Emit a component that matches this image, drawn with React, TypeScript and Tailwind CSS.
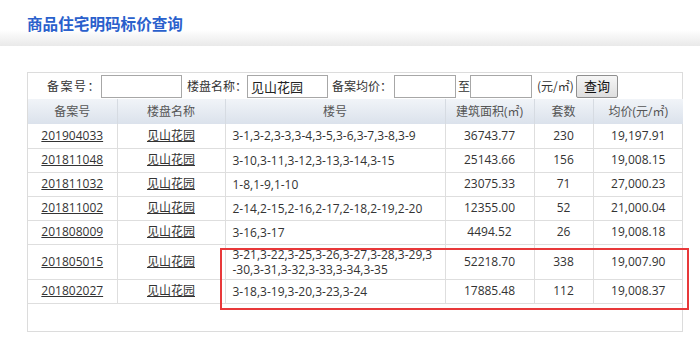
const rows = [
  { no: "201904033", units: "3-1,3-2,3-3,3-4,3-5,3-6,3-7,3-8,3-9", area: "36743.77", count: "230", price: "19,197.91" },
  { no: "201811048", units: "3-10,3-11,3-12,3-13,3-14,3-15", area: "25143.66", count: "156", price: "19,008.15" },
  { no: "201811032", units: "1-8,1-9,1-10", area: "23075.33", count: "71", price: "27,000.23" },
  { no: "201811002", units: "2-14,2-15,2-16,2-17,2-18,2-19,2-20", area: "12355.00", count: "52", price: "21,000.04" },
  { no: "201808009", units: "3-16,3-17", area: "4494.52", count: "26", price: "19,008.18" },
  { no: "201805015", units: "3-21,3-22,3-25,3-26,3-27,3-28,3-29,3\n-30,3-31,3-32,3-33,3-34,3-35", area: "52218.70", count: "338", price: "19,007.90" },
  { no: "201802027", units: "3-18,3-19,3-20,3-23,3-24", area: "17885.48", count: "112", price: "19,008.37" },
];

const headers = ["备案号", "楼盘名称", "楼号", "建筑面积(㎡)", "套数", "均价(元/㎡)"];
const widths = ["w-[89px]", "w-[108px]", "w-[220px]", "w-[89px]", "w-[59px]", "w-[90px]"];

export default function App() {
  return (
    <div className="w-[700px] h-[345px] bg-white font-['Open_Sans','Noto_Sans_CJK_SC',sans-serif] text-[12px] text-[#333] overflow-hidden">
      <div className="h-[46px] bg-linear-to-b from-white from-65% to-[#e9e9e9] pt-[12px]">
        <h1 className="ml-[27px] font-['Noto_Sans_CJK_SC',sans-serif] text-[15.6px] font-bold text-[#2a60cc] leading-[22px]">
          商品住宅明码标价查询
        </h1>
      </div>

      <div className="relative ml-[27px] mt-[26px] w-[656px] h-[260px] border border-[#dcdcdc]">
        <div className="flex items-center h-[26px] pl-[19px] text-[#333] font-['Noto_Sans_CJK_SC',sans-serif]">
          <span className="tracking-[1.5px]">备案号：</span>
          <input className="w-[81px] h-[23px] border border-[#a7a7a7] bg-white" />
          <span className="ml-[5px]">楼盘名称：</span>
          <input
            defaultValue="见山花园"
            className="w-[81px] h-[23px] border border-[#a7a7a7] bg-white px-[3px] text-[13px] text-[#222]"
          />
          <span className="ml-[4px]">备案均价：</span>
          <input className="ml-[2px] w-[62px] h-[23px] border border-[#a7a7a7] bg-white" />
          <span className="ml-[2px]">至</span>
          <input className="w-[62px] h-[23px] border border-[#a7a7a7] bg-white" />
          <span className="ml-[5px]">(元/㎡)</span>
          <button className="ml-[2px] w-[42px] h-[23px] border border-[#8f8f8f] rounded-[2px] bg-linear-to-b from-[#f6f6f6] to-[#dedede] text-[13px] text-[#111]">
            查询
          </button>
        </div>

        <table className="w-[655px] border-collapse table-fixed">
          <thead>
            <tr className="h-[25px] bg-linear-to-b from-[#f1f4f8] to-[#dbe2ec]">
              {headers.map((h, i) => (
                <th
                  key={h}
                  className={`${widths[i]} font-normal text-[#555] text-center border-r border-[#d6dbe2] last:border-r-0`}
                >
                  {h}
                </th>
              ))}
            </tr>
          </thead>
          <tbody>
            {rows.map((r) => (
              <tr key={r.no} className="h-[24px] border-b border-[#dedede]">
                <td className="text-center border-r border-[#dedede] py-[2px]">
                  <a className="underline text-[#333]">{r.no}</a>
                </td>
                <td className="text-center border-r border-[#dedede] py-[2px]">
                  <a className="underline text-[#333]">见山花园</a>
                </td>
                <td className="pl-[7px] border-r border-[#dedede] py-[2px] leading-[15px] whitespace-pre-line">
                  {r.units}
                </td>
                <td className="text-center border-r border-[#dedede] py-[2px]">{r.area}</td>
                <td className="text-center border-r border-[#dedede] py-[2px]">{r.count}</td>
                <td className="text-center py-[2px]">{r.price}</td>
              </tr>
            ))}
          </tbody>
        </table>

        <div className="absolute left-[192px] top-[175px] w-[469px] h-[62px] border-2 border-[#e8383a]" />
      </div>
    </div>
  );
}
